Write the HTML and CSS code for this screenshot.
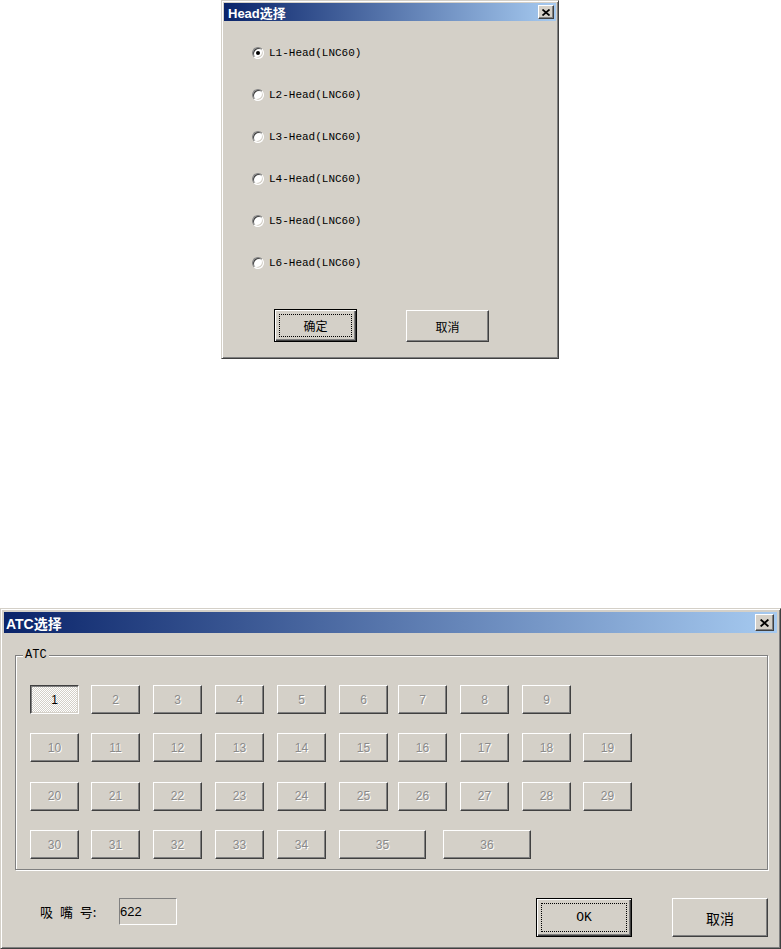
FILE: index.html
```html
<!DOCTYPE html>
<html lang="zh">
<head>
<meta charset="utf-8">
<title>Dialogs</title>
<link rel="stylesheet" href="styles.css">
</head>
<body>
<div class="desk">
  <div class="win win-head">
    <div class="titlebar tb-small">
      <span class="title t-small">Head选择</span>
      <span class="close close-small"><svg width="8" height="7" viewBox="0 0 8 7"><path d="M0.5 0.5 L7.5 6.5 M7.5 0.5 L0.5 6.5" stroke="#000" stroke-width="1.7" fill="none"/></svg></span>
    </div>
    <div class="head-client">
      <div class="radios">
        <div class="radio-row"><span class="radio checked"></span><span class="rtext">L1-Head(LNC60)</span></div>
        <div class="radio-row"><span class="radio"></span><span class="rtext">L2-Head(LNC60)</span></div>
        <div class="radio-row"><span class="radio"></span><span class="rtext">L3-Head(LNC60)</span></div>
        <div class="radio-row"><span class="radio"></span><span class="rtext">L4-Head(LNC60)</span></div>
        <div class="radio-row"><span class="radio"></span><span class="rtext">L5-Head(LNC60)</span></div>
        <div class="radio-row"><span class="radio"></span><span class="rtext">L6-Head(LNC60)</span></div>
      </div>
      <div class="head-buttons">
        <div class="btn default hb"><span>确定</span></div>
        <div class="btn hb hb2"><span>取消</span></div>
      </div>
    </div>
  </div>

  <div class="win win-atc">
    <div class="titlebar tb-large">
      <span class="title t-large">ATC选择</span>
      <span class="close close-large"><svg width="9" height="8" viewBox="0 0 9 8"><path d="M0.6 0.6 L8.4 7.4 M8.4 0.6 L0.6 7.4" stroke="#000" stroke-width="1.9" fill="none"/></svg></span>
    </div>
    <div class="atc-client">
      <div class="group">
        <span class="group-label">ATC</span>
        <div class="rows">
          <div class="row row-std">
            <div class="btn nb pressed">1</div>
            <div class="btn nb dis">2</div>
            <div class="btn nb dis">3</div>
            <div class="btn nb dis">4</div>
            <div class="btn nb dis">5</div>
            <div class="btn nb dis">6</div>
            <div class="btn nb dis">7</div>
            <div class="btn nb dis">8</div>
            <div class="btn nb dis">9</div>
          </div>
          <div class="row row-std">
            <div class="btn nb dis">10</div>
            <div class="btn nb dis">11</div>
            <div class="btn nb dis">12</div>
            <div class="btn nb dis">13</div>
            <div class="btn nb dis">14</div>
            <div class="btn nb dis">15</div>
            <div class="btn nb dis">16</div>
            <div class="btn nb dis">17</div>
            <div class="btn nb dis">18</div>
            <div class="btn nb dis">19</div>
          </div>
          <div class="row row-std">
            <div class="btn nb dis">20</div>
            <div class="btn nb dis">21</div>
            <div class="btn nb dis">22</div>
            <div class="btn nb dis">23</div>
            <div class="btn nb dis">24</div>
            <div class="btn nb dis">25</div>
            <div class="btn nb dis">26</div>
            <div class="btn nb dis">27</div>
            <div class="btn nb dis">28</div>
            <div class="btn nb dis">29</div>
          </div>
          <div class="row row-last">
            <div class="btn nb dis">30</div>
            <div class="btn nb dis">31</div>
            <div class="btn nb dis">32</div>
            <div class="btn nb dis">33</div>
            <div class="btn nb dis">34</div>
            <div class="btn nb dis w35">35</div>
            <div class="btn nb dis w36">36</div>
          </div>
        </div>
      </div>
      <div class="bottom-row">
        <span class="nozzle-label">吸 嘴 号:</span>
        <div class="textbox">622</div>
        <div class="btn default bb bb-ok"><span>OK</span></div>
        <div class="btn bb bb-cancel"><span>取消</span></div>
      </div>
    </div>
  </div>
</div>
</body>
</html>
```
FILE: styles.css
```css
html, body {
  margin: 0;
  padding: 0;
  background: #ffffff;
}
.desk {
  width: 781px;
  height: 949px;
  overflow: hidden;
}
.win {
  box-sizing: border-box;
  background: #d4d0c8;
  border: 1px solid;
  border-color: #d4d0c8 #404040 #404040 #d4d0c8;
  box-shadow: inset 1px 1px #ffffff, inset -1px -1px #808080;
}
.win-head {
  margin-left: 221px;
  width: 338px;
  height: 359px;
  padding: 2px;
}
.win-atc {
  margin-top: 249px;
  width: 781px;
  height: 341px;
  padding: 3px;
}
.titlebar {
  display: flex;
  align-items: center;
  justify-content: space-between;
  background: linear-gradient(to right, #0a246a, #a6caf0);
  color: #ffffff;
  font-family: "Liberation Sans", "Noto Sans CJK SC", sans-serif;
  font-weight: bold;
}
.tb-small {
  height: 18px;
  padding-left: 4px;
}
.tb-large {
  height: 21px;
  padding-left: 2px;
}
.t-small { font-size: 13px; }
.t-large { font-size: 14px; }
.close {
  box-sizing: border-box;
  display: flex;
  align-items: center;
  justify-content: center;
  background: #d4d0c8;
  border: 1px solid;
  border-color: #ffffff #404040 #404040 #ffffff;
  box-shadow: inset -1px -1px #808080;
}
.close-small {
  width: 16px;
  height: 14px;
  margin-right: 2px;
}
.close-large {
  width: 19px;
  height: 17px;
  margin-right: 3px;
}

/* Head dialog */
.head-client {
  padding: 11px 0 0 28px;
}
.radio-row {
  height: 42px;
  display: flex;
  align-items: center;
  gap: 5px;
}
.radio {
  box-sizing: border-box;
  width: 12px;
  height: 12px;
  border-radius: 50%;
  background: #ffffff;
  border: 1px solid;
  border-color: #808080 #ffffff #ffffff #808080;
  box-shadow: inset 1px 1px #404040, inset -1px -1px #d4d0c8;
  display: flex;
  align-items: center;
  justify-content: center;
}
.radio.checked::after {
  content: "";
  width: 4px;
  height: 4px;
  border-radius: 50%;
  background: #000000;
}
.rtext {
  font-family: "Liberation Mono", monospace;
  font-size: 11px;
  color: #000000;
  line-height: 12px;
}
.head-buttons {
  display: flex;
  align-items: flex-start;
  margin-top: 25px;
  margin-left: 22px;
  gap: 49px;
}

/* Buttons */
.btn {
  box-sizing: border-box;
  position: relative;
  display: flex;
  align-items: center;
  justify-content: center;
  background: #d4d0c8;
  border: 1px solid;
  border-color: #ffffff #404040 #404040 #ffffff;
  box-shadow: inset -1px -1px #808080;
  color: #000000;
  font-family: "Noto Sans CJK SC", sans-serif;
}
.btn.default {
  border-color: #000000;
  box-shadow: inset 1px 1px #ffffff, inset -1px -1px #404040, inset -2px -2px #808080;
}
.btn.default::after {
  content: "";
  position: absolute;
  left: 4px;
  top: 4px;
  right: 4px;
  bottom: 4px;
  border: 1px dotted #000000;
}
.hb {
  width: 83px;
  height: 33px;
  font-size: 12px;
}
.hb2 {
  height: 32px;
  margin-top: 1px;
}

/* ATC dialog */
.atc-client {
  padding: 22px 9px 0 11px;
}
.group {
  position: relative;
  box-sizing: border-box;
  width: 753px;
  height: 215px;
  border: 1px solid #808080;
  box-shadow: inset 1px 1px #ffffff, 1px 1px 0 #ffffff;
  padding: 29px 0 0 14px;
}
.group-label {
  position: absolute;
  left: 7px;
  top: -7px;
  padding: 0 2px;
  background: #d4d0c8;
  font-family: "Liberation Mono", monospace;
  font-size: 12px;
  line-height: 12px;
  color: #000000;
}
.rows {
  display: flex;
  flex-direction: column;
  row-gap: 19.4px;
}
.row {
  display: grid;
  height: 29px;
}
.row-std {
  grid-template-columns: 61px 62px 62px 62px 62px 59px 62px 62px 61px 49px;
}
.row-last {
  grid-template-columns: 61px 62px 62px 62px 62px 104px 88px;
}
.nb {
  width: 49px;
  height: 29px;
  font-family: "Liberation Sans", sans-serif;
  font-size: 12px;
}
.nb.dis {
  color: #8a8a8a;
  text-shadow: 1px 1px 0 #ffffff;
}
.nb.w35 { width: 87px; }
.nb.w36 { width: 88px; }
.nb.pressed {
  border-color: #404040 #ffffff #ffffff #404040;
  box-shadow: inset 1px 1px #808080, inset -1px -1px #d4d0c8;
  background-color: #d4d0c8;
  background-image: conic-gradient(#ffffff 25%, #d4d0c8 0 50%, #ffffff 0 75%, #d4d0c8 0);
  background-size: 2px 2px;
  color: #000000;
  padding-top: 1px;
}
.bottom-row {
  display: flex;
  align-items: flex-start;
  margin-top: 28px;
  padding-left: 25px;
}
.nozzle-label {
  width: 79px;
  height: 27px;
  display: flex;
  align-items: center;
  font-family: "Noto Sans CJK SC", sans-serif;
  font-size: 13px;
  word-spacing: 4px;
  color: #000000;
}
.textbox {
  box-sizing: border-box;
  width: 58px;
  height: 27px;
  border: 1px solid;
  border-color: #808080 #ffffff #ffffff #808080;
  background: #d4d0c8;
  display: flex;
  align-items: center;
  padding-left: 0;
  font-family: "Liberation Sans", sans-serif;
  font-size: 13px;
  color: #000000;
}
.bb {
  width: 96px;
  height: 39px;
}
.bb-ok {
  margin-left: 359px;
  font-family: "Liberation Mono", monospace;
  font-size: 13px;
}
.bb-cancel {
  margin-left: 40px;
  font-size: 14px;
}
```
